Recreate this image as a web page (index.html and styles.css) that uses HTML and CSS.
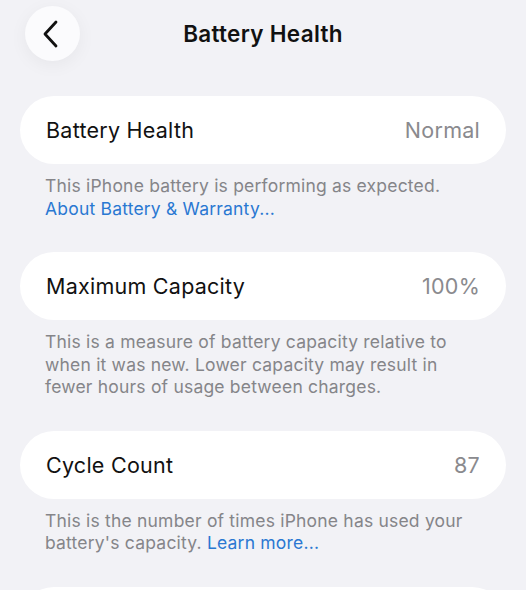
FILE: index.html
```html
<!DOCTYPE html>
<html lang="en">
<head>
  <meta charset="UTF-8">
  <meta name="viewport" content="width=device-width, initial-scale=1">
  <title>Battery Health</title>
  <link rel="stylesheet" href="styles.css">
</head>
<body>

  <header class="nav-bar">
    <button class="back-btn" type="button" aria-label="Back">
      <svg width="18" height="28" viewBox="0 0 18 28">
        <path d="M14 2 L3 14 L14 26" fill="none" stroke="#111" stroke-width="2.8" stroke-linecap="round" stroke-linejoin="round"/>
      </svg>
    </button>
    <h1 class="nav-title">Battery Health</h1>
    <div></div>
  </header>

  <main class="settings">
    <div class="row">
      <span class="row-label">Battery Health</span>
      <span class="row-value">Normal</span>
    </div>
    <p class="footnote">
      This iPhone battery is performing as expected.<br>
      <a href="#">About Battery &amp; Warranty...</a>
    </p>

    <div class="row">
      <span class="row-label">Maximum Capacity</span>
      <span class="row-value">100%</span>
    </div>
    <p class="footnote">
      This is a measure of battery capacity relative to<br>
      when it was new. Lower capacity may result in<br>
      fewer hours of usage between charges.
    </p>

    <div class="row">
      <span class="row-label">Cycle Count</span>
      <span class="row-value">87</span>
    </div>
    <p class="footnote">
      This is the number of times iPhone has used your<br>
      battery's capacity. <a href="#">Learn more...</a>
    </p>

    <div class="row"></div>
  </main>

</body>
</html>
```

FILE: styles.css
```css
body {
  margin: 0;
  font-family: Inter, "Noto Sans", sans-serif;
  background: #f2f2f6;
  color: #111;
}

.nav-bar {
  display: grid;
  grid-template-columns: 1fr auto 1fr;
  align-items: center;
  height: 67px;
  padding: 0 25px;
  margin-bottom: 29px;
}

.back-btn {
  width: 55px;
  height: 55px;
  border: none;
  border-radius: 50%;
  background: #fbfbfd;
  box-shadow: 0 4px 18px rgba(0,0,0,0.05);
  display: flex;
  align-items: center;
  justify-content: center;
  padding: 0 4px 0 0;
}

.nav-title {
  margin: 0;
  font-size: 22.5px;
  font-weight: 600;
  letter-spacing: 0.3px;
}

.settings {
  padding: 0 20px;
}

.row {
  display: flex;
  justify-content: space-between;
  align-items: center;
  height: 68px;
  padding: 0 26px;
  background: #fff;
  border-radius: 34px;
  font-size: 21.5px;
  letter-spacing: 0.25px;
}

.row-value {
  color: #8a8a8e;
}

.footnote {
  margin: 11px 0 32px;
  padding: 0 25px;
  font-size: 17.5px;
  line-height: 22.5px;
  letter-spacing: 0.2px;
  color: #858589;
}

.footnote a {
  color: #2a78d2;
  text-decoration: none;
}
```
